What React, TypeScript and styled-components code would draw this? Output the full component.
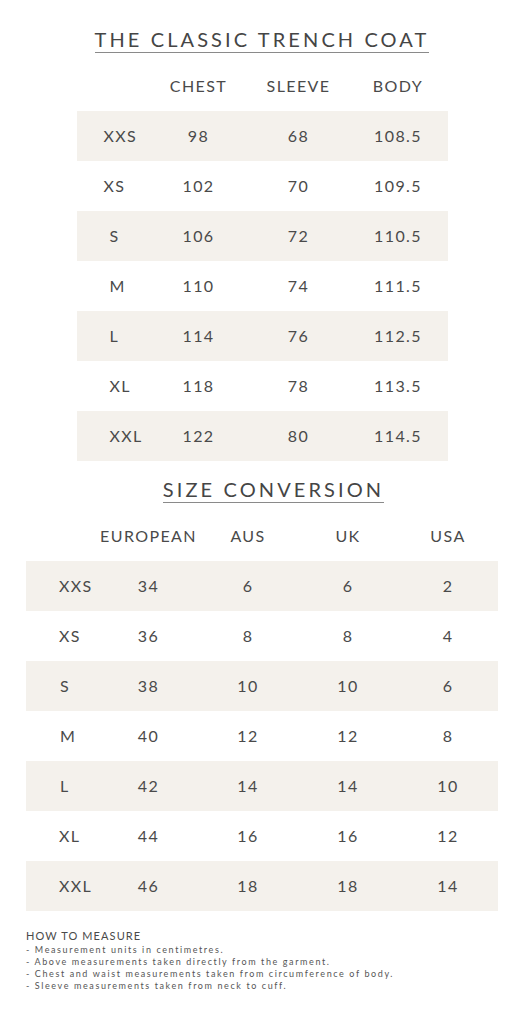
import React from "react";
import styled, { createGlobalStyle } from "styled-components";

const GlobalStyle = createGlobalStyle`
  html, body { margin: 0; padding: 0; background: #ffffff; }
  body { font-family: Lato, "Open Sans", "Liberation Sans", sans-serif; color: #484848; }
`;

const Page = styled.div`
  width: 524px;
  padding-top: 29px;
  display: flex;
  flex-direction: column;
  align-items: center;
`;

const TitleWrap = styled.div<{ $shift?: number }>`
  display: flex;
  justify-content: center;
  width: 100%;
  box-sizing: border-box;
  padding-left: ${(p) => p.$shift ?? 0}px;
  margin-top: ${(p) => (p.$shift ? 18 : 0)}px;
`;

const Title = styled.h2`
  margin: 0;
  font-weight: 400;
  font-size: 20px;
  line-height: 20px;
  letter-spacing: 3.1px;
  color: #454545;
  padding-bottom: 3px;
  border-bottom: 1px solid #8a8a8a;
`;

const Table = styled.div<{ $width: number }>`
  width: ${(p) => p.$width}px;
  margin-top: 8px;
  display: flex;
  flex-direction: column;
`;

const Row = styled.div<{ $cols: string; $shaded?: boolean }>`
  display: grid;
  grid-template-columns: ${(p) => p.$cols};
  height: 50px;
  align-items: center;
  background: ${(p) => (p.$shaded ? "#f4f1ec" : "transparent")};
`;

const Cell = styled.div`
  display: flex;
  justify-content: center;
  white-space: nowrap;
  font-size: 16px;
  line-height: 20px;
  letter-spacing: 1.4px;
  color: #4a4a4a;
`;

const LabelCell = styled(Cell)<{ $indent: number }>`
  justify-content: flex-start;
  padding-left: ${(p) => p.$indent}px;
`;

const Footer = styled.div`
  align-self: stretch;
  padding-left: 26px;
  margin-top: 19px;
  display: flex;
  flex-direction: column;
`;

const FooterHead = styled.div`
  font-size: 11px;
  line-height: 12px;
  letter-spacing: 1.1px;
  color: #4a4a4a;
  margin-bottom: 2px;
`;

const FooterLine = styled.div`
  font-size: 9px;
  line-height: 12px;
  letter-spacing: 1.6px;
  color: #555555;
`;

type Data = { head: string[]; rows: string[][]; indents: number[] };

const trench: Data = {
  head: ["", "CHEST", "SLEEVE", "BODY"],
  rows: [
    ["XXS", "98", "68", "108.5"],
    ["XS", "102", "70", "109.5"],
    ["S", "106", "72", "110.5"],
    ["M", "110", "74", "111.5"],
    ["L", "114", "76", "112.5"],
    ["XL", "118", "78", "113.5"],
    ["XXL", "122", "80", "114.5"],
  ],
  indents: [27, 27, 33, 33, 33, 33, 33],
};

const conv: Data = {
  head: ["", "EUROPEAN", "AUS", "UK", "USA"],
  rows: [
    ["XXS", "34", "6", "6", "2"],
    ["XS", "36", "8", "8", "4"],
    ["S", "38", "10", "10", "6"],
    ["M", "40", "12", "12", "8"],
    ["L", "42", "14", "14", "10"],
    ["XL", "44", "16", "16", "12"],
    ["XXL", "46", "18", "18", "14"],
  ],
  indents: [33, 33, 34, 34, 34, 33, 33],
};

const notes = [
  "- Measurement units in centimetres.",
  "- Above measurements taken directly from the garment.",
  "- Chest and waist measurements taken from circumference of body.",
  "- Sleeve measurements taken from neck to cuff.",
];

function SizeTable({ data, width, cols }: { data: Data; width: number; cols: string }) {
  return (
    <Table $width={width}>
      <Row $cols={cols}>
        {data.head.map((h, i) => (
          <Cell key={i}>{h}</Cell>
        ))}
      </Row>
      {data.rows.map((r, ri) => (
        <Row key={ri} $cols={cols} $shaded={ri % 2 === 0}>
          <LabelCell $indent={data.indents[ri]}>{r[0]}</LabelCell>
          {r.slice(1).map((c, ci) => (
            <Cell key={ci}>{c}</Cell>
          ))}
        </Row>
      ))}
    </Table>
  );
}

export default function App() {
  return (
    <>
      <GlobalStyle />
      <Page>
        <TitleWrap>
          <Title>THE CLASSIC TRENCH COAT</Title>
        </TitleWrap>
        <SizeTable data={trench} width={371} cols="72px 100px 100px 99px" />
        <TitleWrap $shift={23}>
          <Title>SIZE CONVERSION</Title>
        </TitleWrap>
        <SizeTable data={conv} width={472} cols="73px 99px 100px 100px 100px" />
        <Footer>
          <FooterHead>HOW TO MEASURE</FooterHead>
          {notes.map((n, i) => (
            <FooterLine key={i}>{n}</FooterLine>
          ))}
        </Footer>
      </Page>
    </>
  );
}
